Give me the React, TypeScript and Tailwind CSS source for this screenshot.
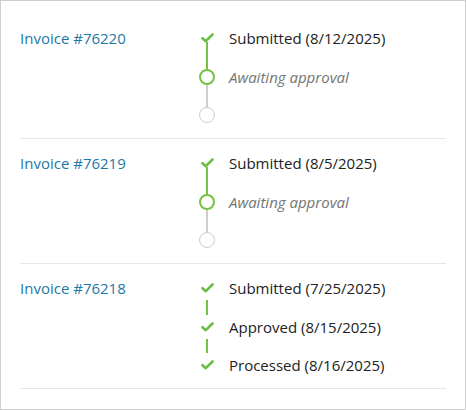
type StepKind = "done" | "current" | "pending";

type Step = { kind: StepKind; label: string };

type Invoice = { id: string; steps: Step[] };

const invoices: Invoice[] = [
  {
    id: "76220",
    steps: [
      { kind: "done", label: "Submitted (8/12/2025)" },
      { kind: "current", label: "Awaiting approval" },
      { kind: "pending", label: "" },
    ],
  },
  {
    id: "76219",
    steps: [
      { kind: "done", label: "Submitted (8/5/2025)" },
      { kind: "current", label: "Awaiting approval" },
      { kind: "pending", label: "" },
    ],
  },
  {
    id: "76218",
    steps: [
      { kind: "done", label: "Submitted (7/25/2025)" },
      { kind: "done", label: "Approved (8/15/2025)" },
      { kind: "done", label: "Processed (8/16/2025)" },
    ],
  },
];

const CheckIcon = () => (
  <svg width="13" height="10" viewBox="0 0 13 10" fill="none">
    <path
      d="M1.5 5.2 L4.8 8.2 L11.5 1.5"
      stroke="#6dbd45"
      strokeWidth="2.6"
      strokeLinecap="round"
      strokeLinejoin="round"
    />
  </svg>
);

const StepIcon = ({ kind }: { kind: StepKind }) => {
  if (kind === "done") return <CheckIcon />;
  if (kind === "current")
    return <div className="w-4 h-4 rounded-full border-2 border-[#76c043] bg-white" />;
  return <div className="w-4 h-4 rounded-full border-[1.5px] border-[#cdcdcd] bg-white" />;
};

// line between two steps; reaches into the icon boxes unless both are checks
const Connector = ({ from, to }: { from: StepKind; to: StepKind }) => {
  const color = to === "pending" ? "bg-[#cdcdcd]" : "bg-[#76c043]";
  let cls = "h-[14.5px]";
  if (from === "done" && to === "current") cls = "h-[26.5px] -mt-[8px]";
  if (from === "current" && to === "pending") cls = "h-[22.5px] -mt-[4px]";
  return (
    <div className="h-[14.5px] flex">
      <div className="w-4 flex justify-center">
        <div className={`w-[1.5px] shrink-0 ${color} ${cls}`} />
      </div>
    </div>
  );
};

const InvoiceRow = ({ invoice }: { invoice: Invoice }) => (
  <div className="flex border-b border-[#e6e6e6] pt-[12px] pb-[11px]">
    <div className="w-[179px] shrink-0">
      <a href="#" className="text-[15px] leading-[24px] text-[#1d78a6]">
        Invoice #{invoice.id}
      </a>
    </div>
    <div className="flex flex-col">
      {invoice.steps.map((step, i) => (
        <div key={i} className="flex flex-col">
          {i > 0 && <Connector from={invoice.steps[i - 1].kind} to={step.kind} />}
          <div className="flex h-6 items-center">
            <div className="w-4 flex justify-center items-center relative z-10">
              <StepIcon kind={step.kind} />
            </div>
            <span
              className={`ml-[14px] text-[15px] leading-[24px] ${
                step.kind === "current" ? "italic text-[#757575]" : "text-[#222222]"
              }`}
            >
              {step.label}
            </span>
          </div>
        </div>
      ))}
    </div>
  </div>
);

export default function App() {
  return (
    <div
      className="w-[466px] h-[410px] bg-white border border-[#cfcfcf] px-[19px] pt-[13px]"
      style={{ fontFamily: '"Open Sans", "Noto Sans", sans-serif' }}
    >
      {invoices.map((inv) => (
        <InvoiceRow key={inv.id} invoice={inv} />
      ))}
    </div>
  );
}
